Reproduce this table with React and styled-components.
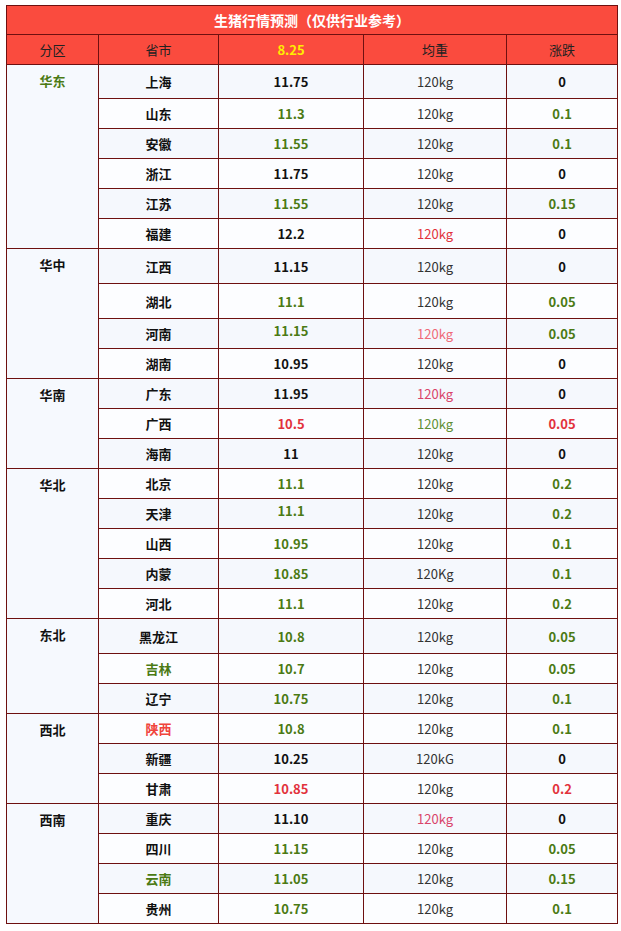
import styled, { createGlobalStyle } from 'styled-components'

const GlobalStyle = createGlobalStyle`
  body {
    margin: 0;
    background: #fff;
    font-family: "Microsoft YaHei", "Noto Sans CJK SC", "Noto Sans", sans-serif;
  }
`

const C = {
  black: '#111',
  green: '#4b7a14',
  red: '#e2323c',
  rose: '#ef6a78',
  crimson: '#d9446a',
  kg: '#333',
  kgGreen: '#5f8f35',
}

const groups = [
  { name: '华东', color: C.green, rows: [
    { city: '上海', price: '11.75', weight: '120kg', diff: '0', h: 34 },
    { city: '山东', price: '11.3', pc: C.green, weight: '120kg', diff: '0.1', dc: C.green },
    { city: '安徽', price: '11.55', pc: C.green, weight: '120kg', diff: '0.1', dc: C.green },
    { city: '浙江', price: '11.75', weight: '120kg', diff: '0' },
    { city: '江苏', price: '11.55', pc: C.green, weight: '120kg', diff: '0.15', dc: C.green },
    { city: '福建', price: '12.2', weight: '120kg', wc: C.red, diff: '0' },
  ]},
  { name: '华中', rows: [
    { city: '江西', price: '11.15', weight: '120kg', diff: '0', h: 35 },
    { city: '湖北', price: '11.1', pc: C.green, weight: '120kg', diff: '0.05', dc: C.green, h: 35 },
    { city: '河南', price: '11.15', pc: C.green, weight: '120kg', wc: C.rose, diff: '0.05', dc: C.green, up: true },
    { city: '湖南', price: '10.95', weight: '120kg', diff: '0' },
  ]},
  { name: '华南', rows: [
    { city: '广东', price: '11.95', weight: '120kg', wc: C.crimson, diff: '0' },
    { city: '广西', price: '10.5', pc: C.red, weight: '120kg', wc: C.kgGreen, diff: '0.05', dc: C.red },
    { city: '海南', price: '11', weight: '120kg', diff: '0' },
  ]},
  { name: '华北', rows: [
    { city: '北京', price: '11.1', pc: C.green, weight: '120kg', diff: '0.2', dc: C.green },
    { city: '天津', price: '11.1', pc: C.green, weight: '120kg', diff: '0.2', dc: C.green, up: true },
    { city: '山西', price: '10.95', pc: C.green, weight: '120kg', diff: '0.1', dc: C.green },
    { city: '内蒙', price: '10.85', pc: C.green, weight: '120Kg', diff: '0.1', dc: C.green },
    { city: '河北', price: '11.1', pc: C.green, weight: '120kg', diff: '0.2', dc: C.green },
  ]},
  { name: '东北', rows: [
    { city: '黑龙江', price: '10.8', pc: C.green, weight: '120kg', diff: '0.05', dc: C.green, h: 35 },
    { city: '吉林', cc: C.green, price: '10.7', pc: C.green, weight: '120kg', diff: '0.05', dc: C.green },
    { city: '辽宁', price: '10.75', pc: C.green, weight: '120kg', diff: '0.1', dc: C.green },
  ]},
  { name: '西北', rows: [
    { city: '陕西', cc: '#f0443c', price: '10.8', pc: C.green, weight: '120kg', diff: '0.1', dc: C.green },
    { city: '新疆', price: '10.25', weight: '120kG', diff: '0' },
    { city: '甘肃', price: '10.85', pc: C.red, weight: '120kg', diff: '0.2', dc: C.red },
  ]},
  { name: '西南', rows: [
    { city: '重庆', price: '11.10', weight: '120kg', wc: C.crimson, diff: '0' },
    { city: '四川', price: '11.15', pc: C.green, weight: '120kg', diff: '0.05', dc: C.green },
    { city: '云南', cc: C.green, price: '11.05', pc: C.green, weight: '120kg', diff: '0.15', dc: C.green },
    { city: '贵州', price: '10.75', pc: C.green, weight: '120kg', diff: '0.1', dc: C.green },
  ]},
]

const Page = styled.div`
  padding: 5px 4px 0 6px;
`

const Table = styled.table`
  width: 611px;
  border-collapse: collapse;
  table-layout: fixed;
  font-size: 13px;
  border: 1px solid #6e1010;
`

const TitleCell = styled.th`
  height: 28px;
  padding: 0;
  background: #fa4b3e;
  color: #fff;
  font-size: 14px;
  font-weight: bold;
  border: 1px solid #6e1010;
`

const HeadCell = styled.th`
  height: 29px;
  padding: 0;
  background: #fa4b3e;
  color: ${p => p.$yellow ? '#ffee00' : '#222'};
  font-weight: ${p => p.$yellow ? 'bold' : 'normal'};
  font-size: 13px;
  border: 1px solid #6e1010;
`

const GroupCell = styled.td`
  vertical-align: top;
  text-align: center;
  padding: 6px 0 0;
  background: #f6f9fe;
  color: ${p => p.$color || C.black};
  font-weight: bold;
  border: 1px solid #6e1010;
`

const Row = styled.tr`
  height: ${p => p.$h}px;
  background: ${p => p.$alt ? '#f5f8fd' : '#fcfdff'};
`

const Cell = styled.td`
  padding: ${p => p.$up ? '0 0 6px' : '0'};
  text-align: center;
  vertical-align: middle;
  color: ${p => p.$color || C.black};
  font-weight: ${p => p.$light ? 'normal' : 'bold'};
  border: 1px solid #6e1010;
`

export default function App() {
  let n = 0
  return (
    <Page>
      <GlobalStyle />
      <Table>
        <colgroup>
          <col style={{ width: 92 }} />
          <col style={{ width: 120 }} />
          <col style={{ width: 145 }} />
          <col style={{ width: 143 }} />
          <col style={{ width: 111 }} />
        </colgroup>
        <thead>
          <tr>
            <TitleCell colSpan={5}>生猪行情预测（仅供行业参考）</TitleCell>
          </tr>
          <tr>
            <HeadCell>分区</HeadCell>
            <HeadCell>省市</HeadCell>
            <HeadCell $yellow>8.25</HeadCell>
            <HeadCell>均重</HeadCell>
            <HeadCell>涨跌</HeadCell>
          </tr>
        </thead>
        <tbody>
          {groups.map(g => g.rows.map((r, i) => {
            const alt = n++ % 2 === 0
            return (
              <Row key={g.name + r.city} $h={r.h || 30} $alt={alt}>
                {i === 0 && (
                  <GroupCell rowSpan={g.rows.length} $color={g.color}>{g.name}</GroupCell>
                )}
                <Cell $color={r.cc}>{r.city}</Cell>
                <Cell $color={r.pc} $up={r.up}>{r.price}</Cell>
                <Cell $color={r.wc || C.kg} $light>{r.weight}</Cell>
                <Cell $color={r.dc}>{r.diff}</Cell>
              </Row>
            )
          }))}
        </tbody>
      </Table>
    </Page>
  )
}
